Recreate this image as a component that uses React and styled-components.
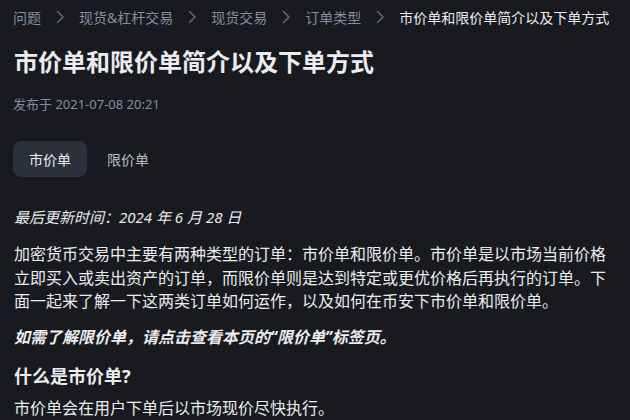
import React from 'react';
import styled, { createGlobalStyle } from 'styled-components';

const GlobalStyle = createGlobalStyle`
  html, body {
    margin: 0;
    padding: 0;
    background: #181a20;
  }
  body {
    font-family: "Noto Sans", "Noto Sans CJK SC", sans-serif;
    color: #eaecef;
  }
`;

const Page = styled.div`
  width: 630px;
  height: 420px;
  overflow: hidden;
  box-sizing: border-box;
  padding: 0 16px 0 14px;
  background: #181a20;
`;

const Breadcrumb = styled.nav`
  display: flex;
  align-items: center;
  gap: 12px;
  height: 34px;
  margin-left: -1px;
  font-size: 14px;
  white-space: nowrap;
`;

const Crumb = styled.span`
  color: ${({ $current }) => ($current ? '#eaecef' : '#848e9c')};
`;

const Title = styled.h1`
  margin: 12px 0 0;
  font-size: 24px;
  line-height: 32px;
  font-weight: 700;
  color: #eaecef;
`;

const Meta = styled.div`
  margin-top: 16px;
  font-size: 13px;
  line-height: 20px;
  color: #848e9c;
  margin-left: -1px;
`;

const Tabs = styled.div`
  display: flex;
  gap: 4px;
  margin-top: 27px;
  margin-left: -1px;
`;

const Tab = styled.button`
  height: 36px;
  padding: 0 16px;
  border: none;
  border-radius: 8px;
  font-family: inherit;
  font-size: 14px;
  background: ${({ $active }) => ($active ? '#2b3139' : 'transparent')};
  color: ${({ $active }) => ($active ? '#eaecef' : '#b7bdc6')};
`;

const Updated = styled.p`
  margin: 28px 0 0;
  font-size: 15px;
  line-height: 24px;
  font-style: italic;
  color: #eaecef;
`;

const Para = styled.p`
  margin: ${({ $top }) => $top}px 0 0;
  font-size: 16px;
  line-height: 23.5px;
  color: #eaecef;
  font-weight: ${({ $strong }) => ($strong ? 700 : 400)};
  font-style: ${({ $strong }) => ($strong ? 'italic' : 'normal')};
`;

const Heading = styled.h2`
  margin: 14px 0 0;
  font-size: 18px;
  line-height: 26px;
  font-weight: 700;
  color: #eaecef;
`;

function Chevron() {
  return (
    <svg width="14" height="14" viewBox="0 0 14 14" fill="none">
      <path d="M4.5 1.5 L10 7 L4.5 12.5" stroke="#5e6673" strokeWidth="1.6" strokeLinecap="round" strokeLinejoin="round" />
    </svg>
  );
}

const crumbs = ['问题', '现货&杠杆交易', '现货交易', '订单类型'];

export default function App() {
  return (
    <>
      <GlobalStyle />
      <Page>
        <Breadcrumb>
          {crumbs.map((c) => (
            <React.Fragment key={c}>
              <Crumb>{c}</Crumb>
              <Chevron />
            </React.Fragment>
          ))}
          <Crumb $current>市价单和限价单简介以及下单方式</Crumb>
        </Breadcrumb>
        <Title>市价单和限价单简介以及下单方式</Title>
        <Meta>发布于 2021-07-08 20:21</Meta>
        <Tabs>
          <Tab $active>市价单</Tab>
          <Tab>限价单</Tab>
        </Tabs>
        <Updated>最后更新时间：2024 年 6 月 28 日</Updated>
        <Para $top={14}>
          加密货币交易中主要有两种类型的订单：市价单和限价单。市价单是以市场当前价格立即买入或卖出资产的订单，而限价单则是达到特定或更优价格后再执行的订单。下面一起来了解一下这两类订单如何运作，以及如何在币安下市价单和限价单。
        </Para>
        <Para $top={12} $strong>如需了解限价单，请点击查看本页的“限价单”标签页。</Para>
        <Heading>什么是市价单?</Heading>
        <Para $top={8}>市价单会在用户下单后以市场现价尽快执行。</Para>
      </Page>
    </>
  );
}
